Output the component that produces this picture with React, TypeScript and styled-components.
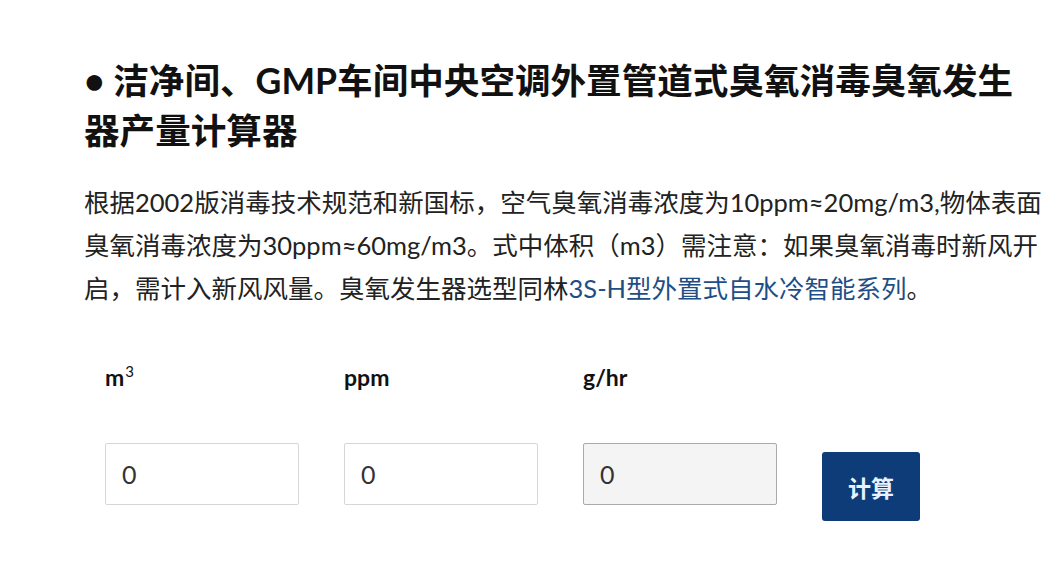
import * as React from 'react';
import styled, { createGlobalStyle } from 'styled-components';

const GlobalStyle = createGlobalStyle`
  html, body {
    margin: 0;
    padding: 0;
    background: #ffffff;
  }
  body {
    font-family: Lato, "Noto Sans CJK SC", sans-serif;
    color: #222222;
  }
`;

const Page = styled.div`
  padding: 56px 0 0 84px;
  width: 970px;
`;

const Title = styled.h2`
  margin: 0 0 25px;
  width: 945px;
  font-size: 35.6px;
  line-height: 50px;
  font-weight: 700;
  color: #111111;
`;

const Intro = styled.p`
  margin: 0;
  font-size: 25.5px;
  line-height: 43px;
  color: #222222;
`;

const Link = styled.a`
  color: #1f4e85;
  text-decoration: none;
`;

const Calculator = styled.div`
  display: grid;
  grid-template-columns: repeat(3, 194px) 98px;
  column-gap: 45px;
  margin: 45px 0 0 21px;
  align-items: start;
`;

const FieldLabel = styled.div`
  font-size: 23px;
  font-weight: 700;
  color: #111111;
  height: 44px;
  line-height: 44px;
  margin-bottom: 44px;

  sup {
    font-size: 15px;
    font-weight: 400;
    vertical-align: 9px;
    line-height: 0;
    margin-left: 1px;
  }
`;

const Field = styled.input<{ $readOnly?: boolean }>`
  box-sizing: border-box;
  width: 194px;
  height: 62px;
  padding: 0 16px;
  border: 1px solid ${p => (p.$readOnly ? '#aaaaaa' : '#d6d6d6')};
  border-radius: 2px;
  background: ${p => (p.$readOnly ? '#f4f4f4' : '#ffffff')};
  font-family: Lato, sans-serif;
  font-size: 25px;
  color: #333333;
  outline: none;
`;

const Button = styled.button`
  width: 98px;
  height: 69px;
  margin-top: 9px;
  border: none;
  border-radius: 3px;
  background: #0d3c78;
  color: #e8f2ff;
  font-family: Lato, "Noto Sans CJK SC", sans-serif;
  font-size: 23px;
  font-weight: 700;
  cursor: pointer;
`;

const Spacer = styled.div``;

export default function App() {
  const [volume, setVolume] = React.useState('0');
  const [ppm, setPpm] = React.useState('0');
  const [output, setOutput] = React.useState('0');

  const calculate = () => {
    const v = parseFloat(volume) || 0;
    const c = parseFloat(ppm) || 0;
    setOutput(String(Math.round(v * c * 2.14 * 60 / 1000 * 100) / 100));
  };

  return (
    <>
      <GlobalStyle />
      <Page>
        <Title>• 洁净间、GMP车间中央空调外置管道式臭氧消毒臭氧发生器产量计算器</Title>
        <Intro>
          根据2002版消毒技术规范和新国标，空气臭氧消毒浓度为10ppm≈20mg/m3,物体表面臭氧消毒浓度为30ppm≈60mg/m3。式中体积（m3）需注意：如果臭氧消毒时新风开启，需计入新风风量。臭氧发生器选型同林
          <Link href="#">3S-H型外置式自水冷智能系列</Link>。
        </Intro>
        <Calculator>
          <FieldLabel>m<sup>3</sup></FieldLabel>
          <FieldLabel>ppm</FieldLabel>
          <FieldLabel>g/hr</FieldLabel>
          <Spacer />
          <Field value={volume} onChange={e => setVolume(e.target.value)} />
          <Field value={ppm} onChange={e => setPpm(e.target.value)} />
          <Field $readOnly readOnly value={output} />
          <Button onClick={calculate}>计算</Button>
        </Calculator>
      </Page>
    </>
  );
}
